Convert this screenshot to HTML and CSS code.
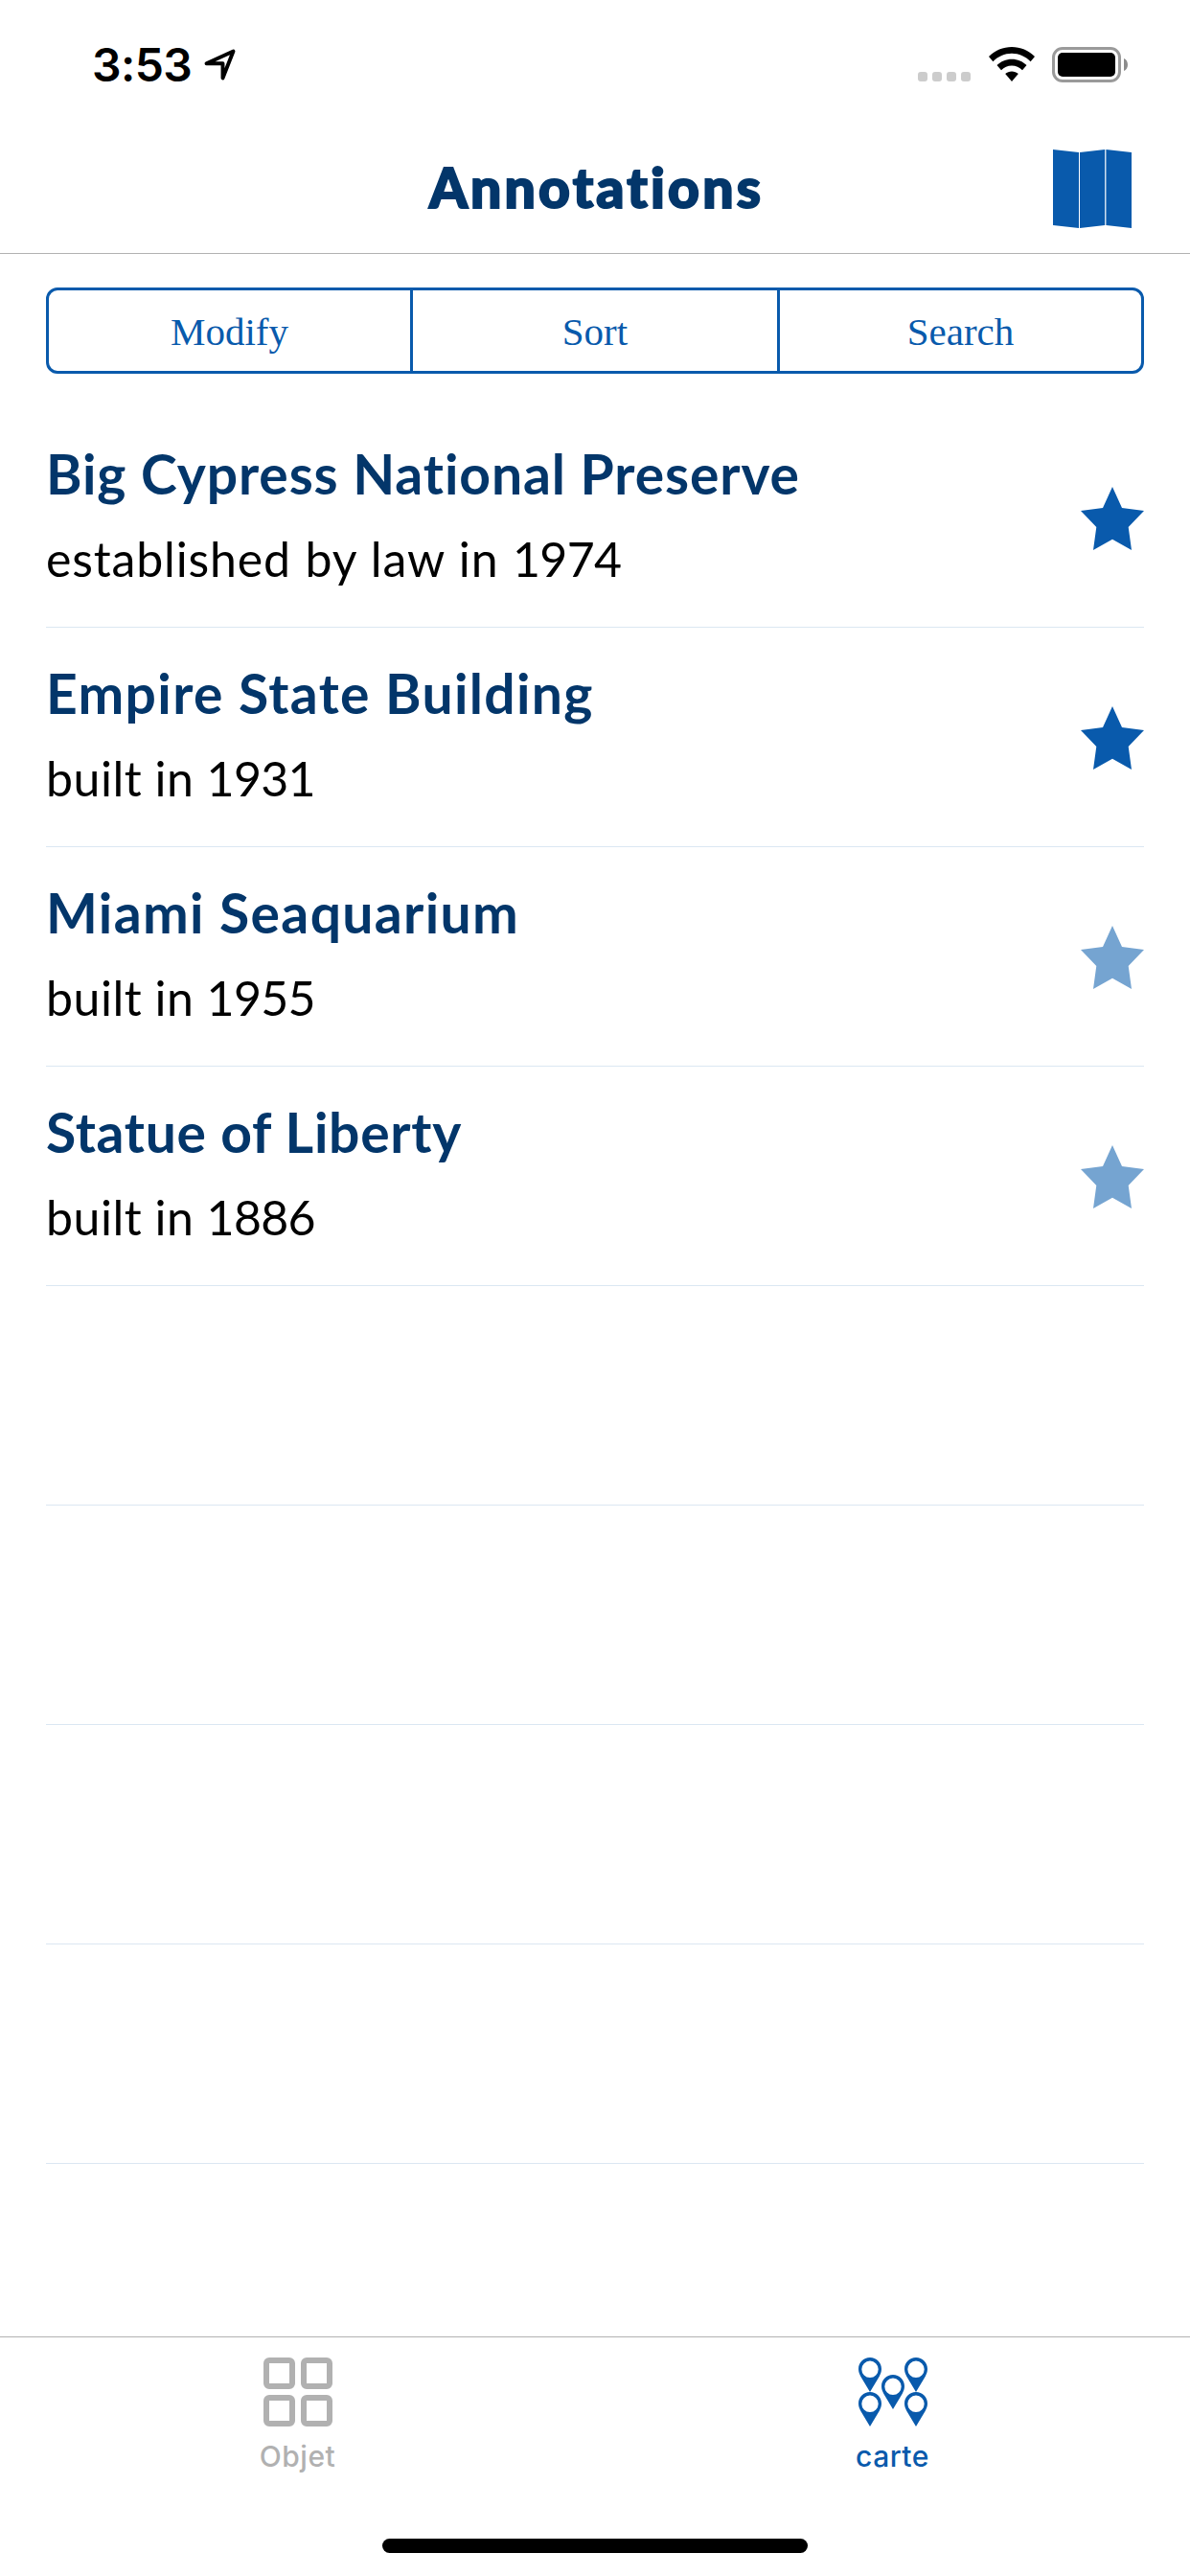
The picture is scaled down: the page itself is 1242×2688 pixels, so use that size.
FILE: index.html
```html
<!DOCTYPE html>
<html lang="en">
<head>
<meta charset="utf-8">
<title>Annotations</title>
<link rel="stylesheet" href="styles.css">
</head>
<body>
<svg class="defs" aria-hidden="true">
  <symbol id="star" viewBox="0 0 66 66"><path d="M33 0 43 22 66 25 49.7 42 53 66 33 54.7 13 66 16.3 42 0 25 23 22Z"/></symbol>
  <symbol id="pin" viewBox="0 0 24 36"><path fill-rule="evenodd" d="M12 0C5.3 0 0 5.3 0 12c0 3 1.100 5.500 2.400 8L12 36l9.600-16c1.300-2.500 2.400-5 2.400-8C24 5.300 18.700 0 12 0Zm0 3.600a8.700 8.700 0 1 1 0 17.400 8.700 8.700 0 0 1 0-17.400Z"/></symbol>
</svg>
<div class="screen">
  <div class="status">
    <span class="time">3:53</span>
    <svg class="location" viewBox="0 0 34 34"><path d="M2.500 15.200 30.500 2.500 19.500 30.500V15.200Z"/></svg>
    <div class="signal"><i></i><i></i><i></i><i></i></div>
    <svg class="wifi" viewBox="0 0 48 36"><path d="M24 0C15 0 6.500 3.500 0 10l4.400 5.200C9.800 9.700 16.500 6.700 24 6.700s14.200 3 19.600 8.500L48 10C41.500 3.500 33 0 24 0Z"/><path d="M24 12.700c-6 0-11.400 2.400-15.500 6.300L13 24.200c3-2.900 6.700-4.700 11-4.700s8 1.800 11 4.700l4.500-5.200c-4.100-3.900-9.500-6.300-15.500-6.300Z"/><path d="M24 25.500c-2.600 0-5 .9-6.800 2.500L24 36l6.800-8c-1.800-1.600-4.200-2.500-6.800-2.500Z"/></svg>
    <svg class="battery" viewBox="0 0 80 37"><rect x="1.500" y="1.500" width="69" height="34" rx="9.500" fill="none" stroke="#9a9a9a" stroke-width="3"/><rect x="6" y="6" width="60" height="25" rx="5"/><path d="M75 12c5.300 2 5.300 11 0 13Z" fill="#8c8c8c"/></svg>
  </div>
  <header class="nav">
    <h1 class="nav-title">Annotations</h1>
    <svg class="map" viewBox="0 0 82 82"><path d="M0 0 27 3V82L0 79ZM28 3 54.200 0V79L28 82ZM55.400 0 82 3V82L55.400 79Z"/></svg>
  </header>
  <div class="segments"><button>Modify</button><button>Sort</button><button>Search</button></div>
  <ul class="list">
    <li><div class="text"><h2 class="medium">Big Cypress National Preserve</h2><p class="long">established by law in <span class="year">1974</span></p></div><svg class="star"><use href="#star"/></svg></li>
    <li><div class="text"><h2>Empire State Building</h2><p>built in <span class="year">1931</span></p></div><svg class="star"><use href="#star"/></svg></li>
    <li><div class="text"><h2>Miami Seaquarium</h2><p>built in <span class="year">1955</span></p></div><svg class="star dim"><use href="#star"/></svg></li>
    <li><div class="text"><h2 class="tight">Statue of Liberty</h2><p>built in <span class="year">1886</span></p></div><svg class="star dim"><use href="#star"/></svg></li>
    <li></li><li></li><li></li><li></li>
  </ul>
  <nav class="tabs">
    <a class="tab"><svg class="tab-icon" viewBox="0 0 72 72"><g fill="none" stroke="#b1b1b1" stroke-width="6"><rect x="3" y="3" width="27" height="27" rx="3"/><rect x="42" y="3" width="27" height="27" rx="3"/><rect x="3" y="42" width="27" height="27" rx="3"/><rect x="42" y="42" width="27" height="27" rx="3"/></g></svg><span>Objet</span></a>
    <a class="tab active"><svg class="tab-icon" viewBox="0 0 72 72"><use href="#pin" width="24" height="36"/><use href="#pin" x="48" width="24" height="36"/><use href="#pin" x="24" y="18" width="24" height="36"/><use href="#pin" y="36" width="24" height="36"/><use href="#pin" x="48" y="36" width="24" height="36"/></svg><span>carte</span></a>
  </nav>
  <div class="home"></div>
</div>
</body>
</html>
```
FILE: styles.css
```css
* { box-sizing: border-box; }
body { margin: 0; background: #fff; color: #000; font-family: Lato, "Open Sans", sans-serif; }
h1, h2, p, ul { margin: 0; padding: 0; }
svg { display: block; flex: none; }
.defs { position: absolute; width: 0; height: 0; }
.screen { width: 1242px; height: 2688px; display: flex; flex-direction: column; }

.status { height: 132px; display: flex; align-items: flex-start; padding: 0 64px 0 96px; }
.time { font: 600 48px/58px Inter, sans-serif; letter-spacing: -0.6px; margin-top: 39px; width: 117px; }
.location { width: 34px; height: 34px; margin-top: 51px; fill: none; stroke: #000; stroke-width: 3.9; stroke-linejoin: round; }
.signal { display: flex; gap: 5px; margin: 75px 19px 0 auto; }
.signal i { width: 10px; height: 10px; border-radius: 3px; background: #ccc; }
.wifi { width: 48px; height: 36px; margin: 49px 18px 0 0; }
.battery { width: 80px; height: 37px; margin-top: 49px; }

.nav { height: 133px; display: grid; grid-template-columns: 1fr auto 1fr; border-bottom: 1px solid #b2b2b2; }
.nav-title { grid-column: 2; font-size: 57px; font-weight: 900; line-height: 68px; letter-spacing: 3.2px; -webkit-text-stroke: 2px #03366a; padding: 29px 0 0 3px; color: #03366a; }
.map { width: 82px; height: 82px; margin: 24px 61px 0 auto; fill: #095aac; }

.segments { display: grid; grid-template-columns: 380px 383px 1fr; height: 90px; margin: 35px 48px 36px; border: 3px solid #095aac; border-radius: 12px; }
.segments button { border: 0; border-right: 3px solid #095aac; background: none; padding: 2px 0 0; color: #095aac; font: 41px/48px "Liberation Serif", serif; }
.segments button:last-child { border-right: 0; }

.list { list-style: none; flex: 1; margin: 0 48px; }
.list li { height: 229px; display: flex; justify-content: space-between; border-bottom: 1px solid #dbe7f2; }
.list h2 { font-size: 57px; font-weight: 700; line-height: 68px; letter-spacing: 1.35px; padding-top: 34px; color: #03366a; }
.list .medium { letter-spacing: 0.9px; }
.list .tight { letter-spacing: 0.7px; }
.list p { font-size: 50px; line-height: 60px; letter-spacing: 0.5px; margin-top: 25px; }
.list .long { letter-spacing: 0.85px; word-spacing: 1px; }
.list .year { letter-spacing: -0.7px; }
.star { width: 66px; height: 66px; margin-top: 82px; fill: #095aac; }
.star.dim { fill: #75a4d1; }

.tabs { height: 211px; display: grid; grid-template-columns: 1fr 1fr; border-top: 1px solid #b2b2b2; }
.tab { display: flex; flex-direction: column; align-items: center; padding-top: 21px; color: #b1b1b1; font: 500 30px/36px Inter, sans-serif; letter-spacing: 0.5px; }
.tab.active { color: #095aac; fill: #095aac; }
.tab-icon { width: 72px; height: 72px; }
.tab span { margin-top: 13px; }
.home { width: 444px; height: 15px; margin: 0 auto 24px; border-radius: 8px; background: #000; }
```
